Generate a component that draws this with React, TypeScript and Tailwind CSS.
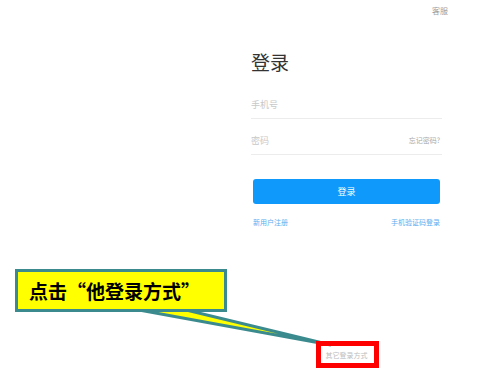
export default function App() {
  return (
    <div
      lang="zh-CN"
      className="relative w-[502px] h-[381px] overflow-hidden bg-white font-['Noto_Sans_CJK_SC','Noto_Sans',sans-serif]"
    >
      {/* top bar */}
      <div className="flex justify-end pr-[54px] pt-[6px]">
        <span className="text-[8px] leading-[10px] text-[#a0a0a0]">客服</span>
      </div>

      {/* form */}
      <div className="ml-[251px] w-[191px] flex flex-col">
        <h1 className="mt-[35px] text-[19px] leading-[22px] text-[#333] font-normal">登录</h1>

        <div className="mt-[18px] flex items-center h-[28px] border-b border-[#ececec]">
          <span className="text-[9px] text-[#c8c8c8]">手机号</span>
        </div>
        <div className="mt-[8px] flex items-center justify-between h-[28px] border-b border-[#ececec]">
          <span className="text-[9px] text-[#c8c8c8]">密码</span>
          <span className="text-[7px] text-[#a8a8a8] pr-[2px]">忘记密码?</span>
        </div>

        <button className="mt-[24px] mx-[2px] h-[25px] rounded-[3px] bg-[#0f99fb] text-white text-[9px]">
          登录
        </button>

        <div className="mt-[14px] mx-[2px] flex justify-between text-[7px] leading-[9px] text-[#5aaef0]">
          <span>新用户注册</span>
          <span>手机验证码登录</span>
        </div>

        <div className="mt-[124px] text-center text-[7px] leading-[9px] text-[#bdbdbd]">其它登录方式</div>
      </div>

      {/* annotation: callout tail */}
      <svg className="absolute left-0 top-0" width="502" height="381">
        <polygon
          points="128,308 178,308 331,345"
          fill="#ffff00"
          stroke="#3b8b8e"
          strokeWidth="3"
          strokeLinejoin="miter"
        />
      </svg>

      {/* annotation: callout box */}
      <div className="absolute left-[15px] top-[269px] w-[212px] h-[43px] border-[3px] border-[#3b8b8e] bg-[#ffff00] flex items-center pl-[11px]">
        <span className="text-[19px] leading-[20px] font-bold text-black [font-feature-settings:'fwid']">
          点击“他登录方式”
        </span>
      </div>

      {/* annotation: red highlight */}
      <div className="absolute left-[316px] top-[341px] w-[63px] h-[27px] border-[5px] border-[#ff0000]" />
    </div>
  )
}
